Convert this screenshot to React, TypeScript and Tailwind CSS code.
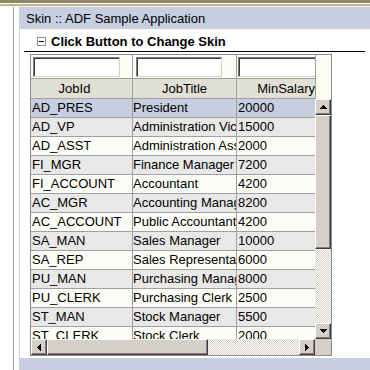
const ROWS: [string, string, string][] = [
  ['AD_PRES', 'President', '20000'],
  ['AD_VP', 'Administration Vice President', '15000'],
  ['AD_ASST', 'Administration Assistant', '2000'],
  ['FI_MGR', 'Finance Manager', '7200'],
  ['FI_ACCOUNT', 'Accountant', '4200'],
  ['AC_MGR', 'Accounting Manager', '8200'],
  ['AC_ACCOUNT', 'Public Accountant', '4200'],
  ['SA_MAN', 'Sales Manager', '10000'],
  ['SA_REP', 'Sales Representative', '6000'],
  ['PU_MAN', 'Purchasing Manager', '8000'],
  ['PU_CLERK', 'Purchasing Clerk', '2500'],
  ['ST_MAN', 'Stock Manager', '5500'],
  ['ST_CLERK', 'Stock Clerk', '2000']
];

type Dir = 'up' | 'down' | 'left' | 'right';

function Arrow({ dir }: { dir: Dir }) {
  // classic 7x4 pixel triangle
  const vertical = dir === 'up' || dir === 'down';
  const rects = [0, 1, 2, 3].map((i) => {
    const step = dir === 'up' || dir === 'left' ? i : 3 - i;
    return vertical
      ? { x: 3 - step, y: i, w: step * 2 + 1, h: 1 }
      : { x: i, y: 3 - step, w: 1, h: step * 2 + 1 };
  });

  return (
    <svg
      width={vertical ? 7 : 4}
      height={vertical ? 4 : 7}
      viewBox={vertical ? '0 0 7 4' : '0 0 4 7'}
      shapeRendering="crispEdges"
    >
      {rects.map((r, i) => (
        <rect key={i} x={r.x} y={r.y} width={r.w} height={r.h} fill="#000" />
      ))}
    </svg>
  );
}

function ScrollButton({ dir }: { dir: Dir }) {
  return (
    <div className="flex h-4 w-4 shrink-0 items-center justify-center border border-t-white border-l-white border-r-[#404040] border-b-[#404040] bg-[#d4d0c8] shadow-[inset_-1px_-1px_0_#808080]">
      <Arrow dir={dir} />
    </div>
  );
}

function FilterInput({ className }: { className: string }) {
  return (
    <div
      className={`h-[20px] border border-t-[#7a7a7a] border-l-[#7a7a7a] border-r-[#d4d0c8] border-b-[#d4d0c8] bg-white shadow-[inset_1px_1px_0_#404040] ${className}`}
    />
  );
}

function DataTable() {
  return (
    <div className="ml-[10px] mt-[2px] flex w-[302px] shrink-0 border border-[#8a8a8a]">
      <div className="flex w-[284px] flex-col">
        <div className="flex h-[24px] border-b border-[#a0a0a0] bg-[#fcfcf4]">
          <div className="w-[102px] shrink-0 border-r border-[#a0a0a0] pl-[2px] pt-[2px]">
            <FilterInput className="w-[87px]" />
          </div>
          <div className="w-[104px] shrink-0 border-r border-[#a0a0a0] pl-[3px] pt-[2px]">
            <FilterInput className="w-[86px]" />
          </div>
          <div className="min-w-0 flex-1 overflow-hidden pl-[1px] pt-[2px]">
            <FilterInput className="w-[90px]" />
          </div>
        </div>

        <div className="flex h-[20px] border-b border-[#a0a0a0] bg-[#e0e0d4] leading-[19px]">
          <div className="flex w-[102px] shrink-0 justify-center border-r border-[#a0a0a0] pr-[14px]">
            JobId
          </div>
          <div className="flex w-[104px] shrink-0 justify-center border-r border-[#a0a0a0]">
            JobTitle
          </div>
          <div className="min-w-0 flex-1 overflow-hidden whitespace-nowrap text-right">
            MinSalary
          </div>
        </div>

        <div className="h-[240px] overflow-hidden">
          {ROWS.map(([id, title, salary], i) => (
            <div
              key={id}
              className={`flex h-[19px] border-b border-[#a0a0a0] leading-[18px] ${
                i === 0 ? 'bg-[#c6cee0]' : i % 2 === 1 ? 'bg-[#e8e8e8]' : 'bg-[#fdfdf8]'
              }`}
            >
              <div className="w-[102px] shrink-0 overflow-hidden whitespace-nowrap border-r border-[#a0a0a0] pl-[1px]">
                {id}
              </div>
              <div className="w-[104px] shrink-0 overflow-hidden whitespace-nowrap border-r border-[#a0a0a0]">
                {title}
              </div>
              <div className="min-w-0 flex-1 overflow-hidden whitespace-nowrap pl-[1px]">
                {salary}
              </div>
            </div>
          ))}
        </div>

        <div className="flex h-4">
          <ScrollButton dir="left" />
          <div className="h-4 w-[161px] shrink-0 border border-t-white border-l-white border-r-[#404040] border-b-[#404040] bg-[#d4d0c8] shadow-[inset_-1px_-1px_0_#808080]" />
          <div className="flex-1 bg-[repeating-conic-gradient(#d4d0c8_0%_25%,#ffffff_0%_50%)] bg-[length:2px_2px]" />
          <ScrollButton dir="right" />
        </div>
      </div>

      <div className="flex w-4 flex-col">
        <div className="h-[44px] border-l border-[#a0a0a0] bg-[#fcfcf4]" />
        <div className="flex h-[240px] flex-col">
          <ScrollButton dir="up" />
          <div className="h-[134px] w-4 shrink-0 border border-t-white border-l-white border-r-[#404040] border-b-[#404040] bg-[#d4d0c8] shadow-[inset_-1px_-1px_0_#808080]" />
          <div className="flex-1 bg-[repeating-conic-gradient(#d4d0c8_0%_25%,#ffffff_0%_50%)] bg-[length:2px_2px]" />
          <ScrollButton dir="down" />
        </div>
        <div className="h-4 bg-[#d4d0c8]" />
      </div>
    </div>
  );
}

export default function App() {
  return (
    <div className="flex h-[370px] w-[370px] flex-col overflow-hidden bg-white font-['Liberation_Sans',Arial,sans-serif] text-[13px] text-black">
      <div className="h-[3px] bg-[#958567]" />
      <div className="h-px bg-white" />
      <div className="h-[2px] bg-[#c3b48c]" />
      <div className="h-px bg-[#f0f0f0]" />

      <div className="flex flex-1">
        <div className="w-[13px] shrink-0" />
        <div className="flex flex-1 border-l border-[#a6a6a6] pl-[5px]">
          <div className="flex flex-1 flex-col border-l border-[#cfcfcf]">
            <div className="h-[22px] shrink-0 bg-[#c6cee0] pl-[6px] pt-[1px] leading-[21px]">
              Skin :: ADF Sample Application
            </div>

            <div className="ml-[4px] mr-[5px] flex h-[23px] shrink-0 items-center border-b border-black pl-[13px] pt-[3px]">
              <svg width="9" height="9" viewBox="0 0 9 9" shapeRendering="crispEdges">
                <rect x="0.5" y="0.5" width="8" height="8" fill="#fff" stroke="#8e8e8e" />
                <rect x="2" y="4" width="5" height="1" fill="#000" />
              </svg>
              <span className="ml-[5px] font-bold">Click Button to Change Skin</span>
            </div>

            <DataTable />

            <div className="flex-1" />
            <div className="h-[12px] shrink-0 bg-[#c6cee0]" />
          </div>
        </div>
      </div>
    </div>
  );
}
